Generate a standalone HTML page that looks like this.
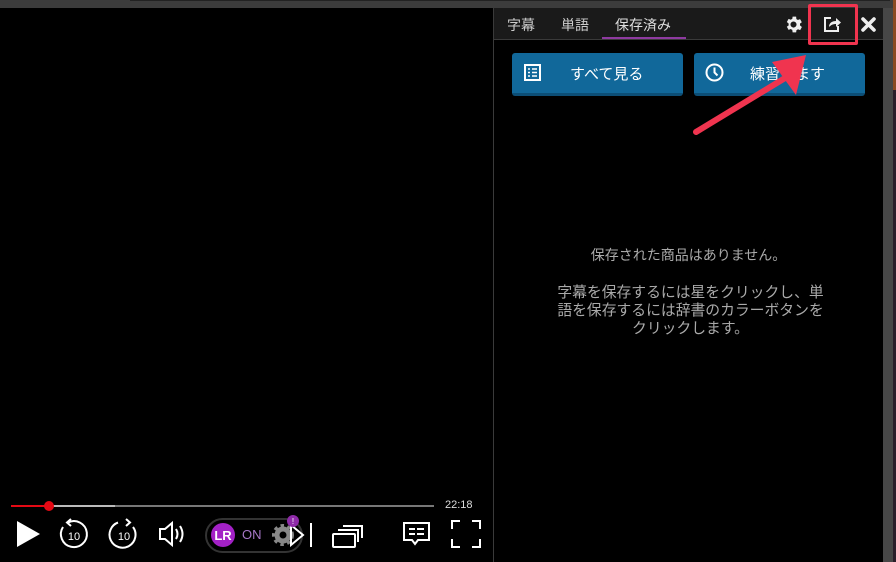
<!DOCTYPE html>
<html><head><meta charset="utf-8"><style>
*{margin:0;padding:0;box-sizing:border-box}
body{width:896px;height:562px;background:#000;position:relative;overflow:hidden;font-family:"Liberation Sans","Noto Sans CJK JP",sans-serif}
.a{position:absolute}
</style></head><body>
<div class="a" style="left:0;top:0;width:896px;height:8px;background:#3c3c3c"></div>
<div class="a" style="left:130px;top:0;width:760px;height:1px;background:#222"></div>
<div class="a" style="left:883px;top:8px;width:10px;height:554px;background:#474747"></div>
<div class="a" style="left:893px;top:0;width:3px;height:562px;background:#2a1e2a"></div>
<div class="a" style="left:893px;top:0;width:3px;height:90px;background:#8a4a22"></div>
<!-- panel -->
<div class="a" style="left:493px;top:8px;width:390px;height:554px;background:#000;border-left:1px solid #3a3a3a"></div>
<div class="a" style="left:494px;top:8px;width:389px;height:32px;background:#1a1a1a;border-bottom:1px solid #3a3a3a"></div>
<div class="a" style="left:507px;top:15px;color:#ccc;font-size:14px">字幕</div>
<div class="a" style="left:561px;top:15px;color:#ccc;font-size:14px">単語</div>
<div class="a" style="left:615px;top:15px;color:#ddd;font-size:14px">保存済み</div>
<div class="a" style="left:602px;top:37px;width:84px;height:2px;background:#8e3aa0"></div>
<svg class="a" style="left:783px;top:14px" width="21" height="21" viewBox="0 0 24 24"><path fill="#eee" d="M19.4 13a7.5 7.5 0 000-2l2.1-1.6-2-3.5-2.5 1a7 7 0 00-1.7-1L15 3h-4l-.4 2.6a7 7 0 00-1.7 1l-2.5-1-2 3.5L6.5 11a7.5 7.5 0 000 2l-2.1 1.6 2 3.5 2.5-1a7 7 0 001.7 1L11 21h4l.4-2.6a7 7 0 001.7-1l2.5 1 2-3.5zM12 15.5A3.5 3.5 0 1112 8.5a3.5 3.5 0 010 7z"/></svg>
<svg class="a" style="left:823px;top:15px" width="18" height="18" viewBox="0 0 18 18"><path fill="none" stroke="#eee" stroke-width="2" d="M8 3H2v13h13v-5"/><path fill="#eee" d="M6 12c0-4 3-6 7-6V3l5 4.5-5 4.5V9c-3 0-5 1-7 3z"/></svg>
<div class="a" style="left:808px;top:4px;width:50px;height:41px;border:3px solid #f0344f;border-radius:2px"></div>
<svg class="a" style="left:861px;top:17px" width="15" height="15" viewBox="0 0 15 15"><path d="M2 2L13 13M13 2L2 13" stroke="#eee" stroke-width="3.6" stroke-linecap="round"/></svg>
<!-- buttons -->
<div class="a" style="left:512px;top:53px;width:171px;height:43px;background:#11689a;border-radius:3px;border-bottom:3px solid #0c4e76"></div>
<svg class="a" style="left:524px;top:64px" width="17" height="17" viewBox="0 0 17 17"><rect x="1" y="1" width="15" height="15" fill="none" stroke="#fff" stroke-width="2"/><path d="M4 5h2M8 5h5M4 8.5h2M8 8.5h5M4 12h2M8 12h5" stroke="#fff" stroke-width="1.6"/></svg>
<div class="a" style="left:570px;top:63px;color:#fff;font-size:15px">すべて見る</div>
<div class="a" style="left:694px;top:53px;width:171px;height:43px;background:#11689a;border-radius:3px;border-bottom:3px solid #0c4e76"></div>
<svg class="a" style="left:705px;top:63px" width="19" height="19" viewBox="0 0 19 19"><circle cx="9.5" cy="9.5" r="8" fill="none" stroke="#fff" stroke-width="2"/><path d="M9.5 4.5v5l3 3" fill="none" stroke="#fff" stroke-width="2"/></svg>
<div class="a" style="left:750px;top:63px;color:#fff;font-size:15px">練習します</div>
<svg class="a" style="left:0;top:0" width="896" height="562"><path d="M696 132L790 75" stroke="#f0344f" stroke-width="6" stroke-linecap="round"/><path d="M806 55L772 62L796 95Z" fill="#f0344f"/></svg>
<div class="a" style="left:494px;top:246px;width:389px;text-align:center;color:#aaa;font-size:14px;line-height:18px">保存された商品はありません。</div>
<div class="a" style="left:554px;top:284px;width:273px;text-align:center;color:#aaa;font-size:14.8px;line-height:18px">字幕を保存するには星をクリックし、単語を保存するには辞書のカラーボタンをクリックします。</div>
<!-- player -->
<div class="a" style="left:11px;top:505px;width:423px;height:2px;background:#777"></div>
<div class="a" style="left:11px;top:505px;width:104px;height:2px;background:#bbb"></div>
<div class="a" style="left:11px;top:505px;width:38px;height:2px;background:#e50914"></div>
<div class="a" style="left:44px;top:501px;width:10px;height:10px;border-radius:50%;background:#e50914"></div>
<div class="a" style="left:445px;top:499px;color:#ddd;font-size:11px">22:18</div>
<svg class="a" style="left:0;top:515px" width="493" height="40" viewBox="0 0 493 40"><path d="M17 6v26l23-13z" fill="#fff"/>
<g fill="none" stroke="#fff" stroke-width="2"><path d="M68 7.5A13 13 0 1 1 63 12"/><path d="M71 4l-4 3.5 4 3.5"/>
<path d="M118 7.5A13 13 0 1 0 133 12"/><path d="M126 4l4 3.5-4 3.5"/>
<path d="M160 14h5l7-6v22l-7-6h-5z"/><path d="M176 14q3 5 0 10M180 11q5 8 0 16"/>
<rect x="333" y="19" width="22" height="13" rx="1"/><path d="M338 15h20v12M343 11h19v12"/>
<path d="M404 8h25v17h-11l-3 4-3-4h-8z"/><path d="M409 14h6M417 14h7M409 19h6M417 19h7"/>
<path d="M452 14V6h8M472 6h8v8M480 24v8h-8M460 32h-8v-8"/>
<rect x="206" y="4" width="96" height="33" rx="16.5" stroke="#333"/></g>
<text x="74" y="25" fill="#fff" font-size="11" text-anchor="middle" font-family="Liberation Sans">10</text>
<text x="124" y="25" fill="#fff" font-size="11" text-anchor="middle" font-family="Liberation Sans">10</text>
<circle cx="223" cy="20" r="12" fill="#a321c6"/><text x="223" y="25" fill="#fff" font-size="13" font-weight="bold" text-anchor="middle" font-family="Liberation Sans">LR</text>
<text x="242" y="24" fill="#a777c7" font-size="13" font-family="Liberation Sans">ON</text>
<circle cx="283" cy="20" r="6" fill="none" stroke="#888" stroke-width="5"/>
<circle cx="283" cy="20" r="9.5" fill="none" stroke="#888" stroke-width="3" stroke-dasharray="3.5 3.5"/>
<path d="M291 10l12 10-12 10z M311 8v24" fill="none" stroke="#fff" stroke-width="2"/>
<circle cx="293" cy="6" r="6" fill="#8e2aa8"/><text x="293" y="9" fill="#fff" font-size="8" text-anchor="middle">!</text>
</svg>
</body></html>
